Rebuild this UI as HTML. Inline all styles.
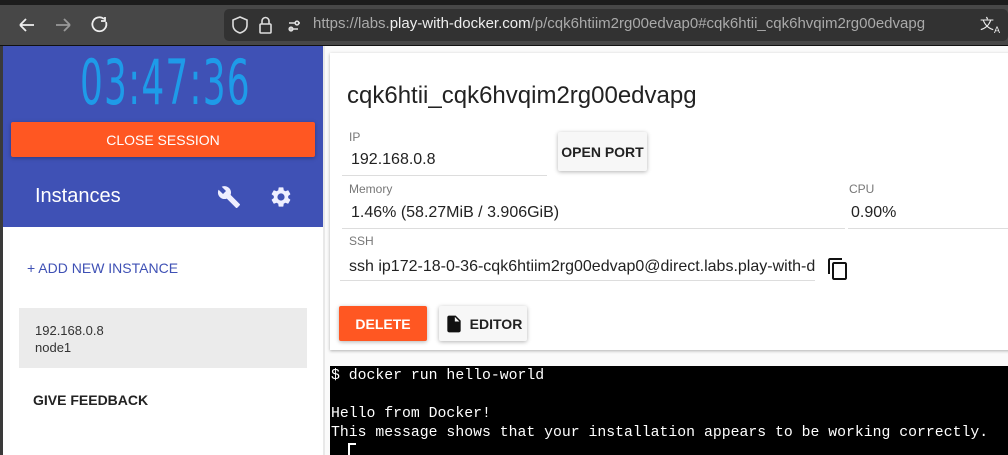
<!DOCTYPE html>
<html><head><meta charset="utf-8"><style>
*{box-sizing:border-box;margin:0;padding:0}
body{width:1008px;height:455px;overflow:hidden;background:#fafafa;font-family:"Liberation Sans",sans-serif;position:relative}
.a{position:absolute}
.lbl{font-size:12px;color:#777}
.val{font-size:16px;color:#222}
.ul{height:1px;background:#ddd}
.btn{box-shadow:0 1px 4px rgba(0,0,0,.3);border-radius:2px;font-weight:bold;font-size:14px;display:flex;align-items:center;justify-content:center}
.mono{font-family:"Liberation Mono",monospace;font-size:14.8px;color:#fff;white-space:pre}
</style></head><body>
<div class="a" style="left:0;top:0;width:1008px;height:5px;background:#1c1c1c"></div>
<div class="a" style="left:0;top:5px;width:1008px;height:40px;background:#474747"></div>
<div class="a" style="left:0;top:45px;width:1008px;height:1px;background:#111"></div>
<div class="a" style="left:224px;top:9px;width:784px;height:32px;background:#323232;border-radius:5px"></div>
<svg class="a" style="left:16px;top:13px" width="100" height="24" viewBox="0 0 100 24" fill="none" stroke-width="1.8">
<path d="M4 12h14M4 12l6-6M4 12l6 6" stroke="#eee"/>
<path d="M40 12h14M54 12l-6-6M54 12l-6 6" stroke="#999"/>
<path d="M90 9a7 7 0 1 1-2-3" stroke="#eee"/>
<path d="M89 4v4h-4" stroke="#eee"/>
</svg>
<svg class="a" style="left:230px;top:13px" width="80" height="24" viewBox="0 0 80 24" fill="none" stroke="#ddd" stroke-width="1.6">
<path d="M10 4l7 3v5c0 5-4 7-7 8-3-1-7-3-7-8V7z"/>
<rect x="30" y="11" width="11" height="9" rx="1"/><path d="M32 11V8a3.5 3.5 0 0 1 7 0v3"/>
<path d="M59 10h6M59 16h9M68 10h2"/><circle cx="67" cy="10" r="1.8"/><circle cx="61" cy="16" r="1.8"/>
</svg>
<div class="a" style="left:313px;top:15px;font-size:15px;color:#aaa;white-space:nowrap">https://labs.<span style="color:#eee">play-with-docker.com</span>/p/cqk6htiim2rg00edvap0#cqk6htii_cqk6hvqim2rg00edvapg</div>
<div class="a" style="left:980px;top:14px;font-size:14px;color:#eee">文<sub style="font-size:9px">A</sub></div>

<div class="a" style="left:0;top:46px;width:3px;height:409px;background:#3a3a3a"></div>
<div class="a" style="left:3px;top:46px;width:320px;height:181px;background:#3f51b5"></div>
<div class="a" style="left:3px;top:227px;width:320px;height:228px;background:#fff"></div>
<div class="a" style="left:323px;top:46px;width:2px;height:409px;background:#e8e8e8"></div>
<div class="a" style="left:80px;top:46px;font-size:62px;color:#1e9be8;letter-spacing:2px;transform:scaleX(.58);transform-origin:left top;font-family:'DejaVu Sans',sans-serif;white-space:nowrap">03:47:36</div>
<div class="a btn" style="left:11px;top:122px;width:304px;height:35px;background:#ff5722;color:#fff;font-weight:normal;font-size:14px">CLOSE SESSION</div>
<div class="a" style="left:35px;top:185px;font-size:20px;color:#fff">Instances</div>
<svg class="a" style="left:217px;top:185px" width="24" height="24" viewBox="0 0 24 24"><path fill="#eef" d="M22.7 19l-9.1-9.1c.9-2.3.4-5-1.5-6.9-2-2-5-2.4-7.4-1.3L9 6 6 9 1.6 4.7C.4 7.1.9 10.1 2.9 12.1c1.9 1.900 4.6 2.4 6.9 1.5l9.1 9.1c.4.4 1 .4 1.4 0l2.3-2.3c.5-.4.5-1.1.1-1.4z"/></svg>
<svg class="a" style="left:269px;top:185px" width="24" height="24" viewBox="0 0 24 24"><path fill="#eef" d="M19.14 12.94c.04-.3.06-.61.06-.94s-.02-.64-.07-.94l2.030-1.58a.49.49 0 0 0 .12-.61l-1.92-3.32a.49.49 0 0 0-.59-.22l-2.39.96c-.5-.38-1.03-.7-1.62-.94l-.36-2.54A.48.48 0 0 0 13.92 2.4h-3.84c-.24 0-.43.17-.47.41l-.36 2.54c-.59.24-1.13.57-1.62.94l-2.39-.96a.48.48 0 0 0-.59.22L2.73 8.87c-.12.21-.08.47.12.61l2.03 1.58c-.05.3-.09.63-.09.94s.02.64.07.94l-2.03 1.58a.49.49 0 0 0-.12.61l1.92 3.32c.12.22.37.29.59.22l2.39-.96c.5.38 1.03.7 1.62.94l.36 2.54c.05.24.24.41.48.41h3.84c.24 0 .44-.17.47-.41l.36-2.54c.59-.24 1.13-.56 1.62-.94l2.39.96c.22.08.47 0 .59-.22l1.92-3.32c.12-.22.07-.47-.12-.61zM12 15.6A3.6 3.6 0 1 1 12 8.4a3.6 3.6 0 0 1 0 7.2z"/></svg>
<div class="a" style="left:27px;top:260px;font-size:14px;color:#3f51b5">+ ADD NEW INSTANCE</div>
<div class="a" style="left:19px;top:308px;width:288px;height:60px;background:#ebebeb"></div>
<div class="a" style="left:35px;top:322px;font-size:13px;color:#333;line-height:17px">192.168.0.8<br>node1</div>
<div class="a" style="left:33px;top:392px;font-size:14px;font-weight:bold;color:#222">GIVE FEEDBACK</div>

<div class="a" style="left:330px;top:53px;width:690px;height:297px;background:#fff;box-shadow:0 1px 3px rgba(0,0,0,.3)"></div>
<div class="a" style="left:347px;top:82px;font-size:24px;color:#222">cqk6htii_cqk6hvqim2rg00edvapg</div>
<div class="a lbl" style="left:349px;top:130px">IP</div>
<div class="a val" style="left:351px;top:151px">192.168.0.8</div>
<div class="a ul" style="left:342px;top:175px;width:205px"></div>
<div class="a btn" style="left:558px;top:132px;width:89px;height:39px;background:#f7f7f7;color:#222">OPEN PORT</div>
<div class="a lbl" style="left:349px;top:182px">Memory</div>
<div class="a val" style="left:351px;top:204px">1.46% (58.27MiB / 3.906GiB)</div>
<div class="a ul" style="left:342px;top:228px;width:503px"></div>
<div class="a lbl" style="left:849px;top:182px">CPU</div>
<div class="a val" style="left:851px;top:204px">0.90%</div>
<div class="a ul" style="left:848px;top:228px;width:160px"></div>
<div class="a lbl" style="left:349px;top:234px">SSH</div>
<div class="a val" style="left:349px;top:258px;white-space:nowrap">ssh ip172-18-0-36-cqk6htiim2rg00edvap0@direct.labs.play-with-d</div>
<div class="a ul" style="left:340px;top:280px;width:475px"></div>
<svg class="a" style="left:826px;top:257px" width="24" height="24" viewBox="0 0 24 24"><path fill="#111" d="M16 1H4c-1.1 0-2 .9-2 2v14h2V3h12V1zm3 4H8c-1.1 0-2 .9-2 2v14c0 1.1.9 2 2 2h11c1.1 0 2-.9 2-2V7c0-1.1-.9-2-2-2zm0 16H8V7h11v14z"/></svg>
<div class="a btn" style="left:339px;top:306px;width:88px;height:35px;background:#ff5722;color:#fff">DELETE</div>
<div class="a btn" style="left:439px;top:306px;width:88px;height:35px;background:#f7f7f7;color:#222"><svg width="20" height="22" viewBox="0 0 24 24" style="margin-right:6px"><path fill="#111" d="M6 2c-1.1 0-2 .9-2 2v16c0 1.1.9 2 2 2h12c1.1 0 2-.9 2-2V8l-6-6H6zm7 7V3.5L18.5 9H13z"/></svg>EDITOR</div>

<div class="a" style="left:330px;top:366px;width:678px;height:89px;background:#000"></div>
<div class="a mono" style="left:331px;top:367px;line-height:19px">$ docker run hello-world

Hello from Docker!
This message shows that your installation appears to be working correctly.</div>
<div class="a" style="left:348px;top:443px;width:8px;height:2px;background:#fff"></div>
<div class="a" style="left:348px;top:443px;width:2px;height:12px;background:#fff"></div>
</body></html>
